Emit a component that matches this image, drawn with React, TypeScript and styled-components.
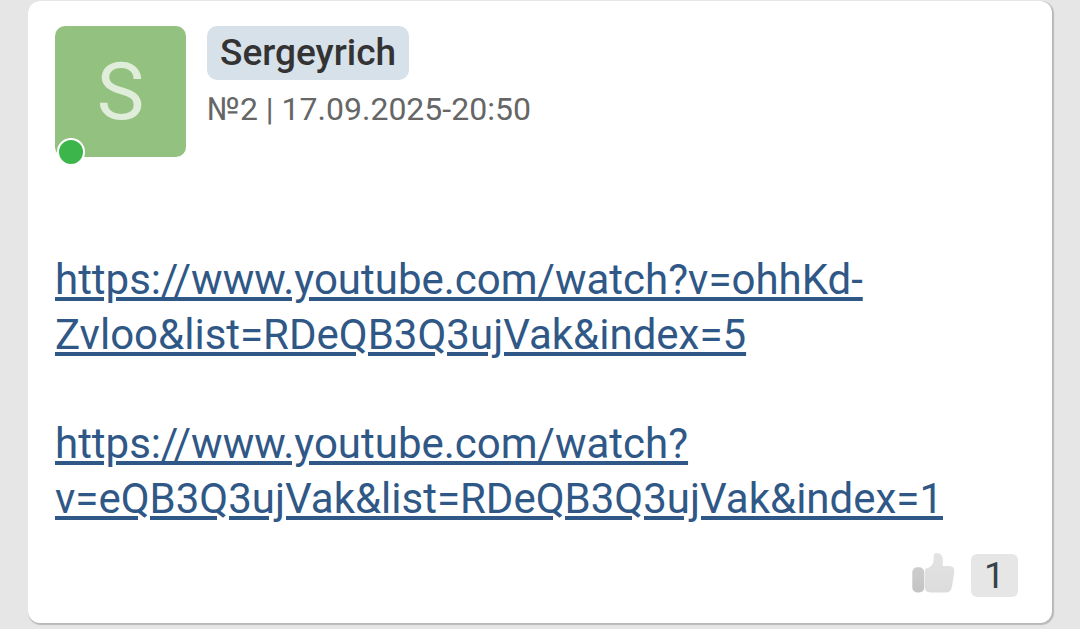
import React from 'react';
import styled, { createGlobalStyle } from 'styled-components';

const GlobalStyle = createGlobalStyle`
  * {
    box-sizing: border-box;
  }
  body {
    margin: 0;
    background: #e6e6e6;
    font-family: Roboto, 'Liberation Sans', sans-serif;
  }
`;

const Thread = styled.main`
  padding: 1px 28px 4px;
`;

const Post = styled.article`
  padding: 25px 34px 26px 27px;
  border-radius: 12px;
  background: #fff;
  box-shadow: 1px 1px 1px 1px #b8b8b8;
  clip-path: inset(0 -4px -4px 0);
`;

const PostHeader = styled.header`
  display: flex;
  align-items: flex-start;
  gap: 21px;
`;

const Avatar = styled.div`
  position: relative;
  display: flex;
  align-items: center;
  justify-content: center;
  width: 131px;
  height: 131px;
  border-radius: 10px;
  background: #93c17f;
  color: #e0edda;
  font-size: 80px;
  line-height: 80px;
`;

const OnlineDot = styled.span`
  position: absolute;
  left: 2px;
  bottom: -9px;
  width: 28px;
  height: 28px;
  border: 2px solid #fff;
  border-radius: 50%;
  background: #3cb54a;
`;

const AuthorInfo = styled.div`
  display: flex;
  flex-direction: column;
  align-items: flex-start;
  gap: 8px;
`;

const AuthorLink = styled.a`
  padding: 0 13px;
  border-radius: 10px;
  background: #d7e1ea;
  color: #333;
  font-size: 37px;
  font-weight: 500;
  line-height: 54px;
  text-decoration: none;
`;

const Meta = styled.div`
  color: #666;
  font-size: 32px;
  line-height: 42px;
`;

const PostBody = styled.div`
  display: flex;
  flex-direction: column;
  gap: 54px;
  margin-top: 95px;
`;

const Paragraph = styled.p`
  margin: 0;
  font-size: 42px;
  line-height: 55px;
`;

const BodyLink = styled.a`
  color: #305887;
  text-decoration: underline;
`;

const PostFooter = styled.footer`
  display: flex;
  align-items: center;
  justify-content: flex-end;
  gap: 16px;
  margin-top: 28px;
`;

const LikeButton = styled.button`
  display: flex;
  padding: 0;
  border: 0;
  background: none;
  cursor: pointer;
`;

const LikeCount = styled.button`
  width: 47px;
  height: 43px;
  padding: 0;
  border: 0;
  border-radius: 6px;
  background: #e6e6e6;
  color: #37424a;
  font-family: inherit;
  font-size: 37px;
  line-height: 43px;
  cursor: pointer;
`;

const ThumbIcon = () => (
  <svg width="44" height="43" viewBox="0 0 44 43" overflow="visible" aria-hidden="true">
    <defs>
      <linearGradient id="hand" x1="0" y1="0" x2="0" y2="1">
        <stop offset="0" stopColor="#e3e3e3" />
        <stop offset="1" stopColor="#dcdcdc" />
      </linearGradient>
      <linearGradient id="cuff" x1="0" y1="0" x2="0" y2="1">
        <stop offset="0" stopColor="#cdcdcd" />
        <stop offset="1" stopColor="#c3c3c3" />
      </linearGradient>
    </defs>
    <rect x="1.3" y="13.3" width="12" height="25.2" rx="5" fill="url(#cuff)" />
    <path
      d="M14 17C14 15 14.700 14.300 16.500 14C19.500 13.300 21.800 11 22.400 7.500C22.700 5.500 22.400 3.500 22.800 1.500C23.200-0.300 24-0.900 25.700-0.900C29.500-0.900 31.900 2 31.900 6C31.900 8.500 31.700 10.300 31.700 12H37.500C41.800 12 43.800 14 43.200 18C42.600 22.500 42 28 40.700 33.500C39.900 37 38.300 38.400 34.800 38.400H19.500C16 38.400 14 36.600 14 33.200Z"
      fill="url(#hand)"
    />
  </svg>
);

const links = [
  'https://www.youtube.com/watch?v=ohhKd-Zvloo&list=RDeQB3Q3ujVak&index=5',
  'https://www.youtube.com/watch?v=eQB3Q3ujVak&list=RDeQB3Q3ujVak&index=1',
];

export default function App() {
  return (
    <>
      <GlobalStyle />
      <Thread>
        <Post>
          <PostHeader>
            <Avatar>
              S
              <OnlineDot />
            </Avatar>
            <AuthorInfo>
              <AuthorLink href="#author">Sergeyrich</AuthorLink>
              <Meta>№2 | 17.09.2025-20:50</Meta>
            </AuthorInfo>
          </PostHeader>
          <PostBody>
            {links.map((url) => (
              <Paragraph key={url}>
                <BodyLink href={url}>{url}</BodyLink>
              </Paragraph>
            ))}
          </PostBody>
          <PostFooter>
            <LikeButton type="button" aria-label="Like">
              <ThumbIcon />
            </LikeButton>
            <LikeCount type="button">1</LikeCount>
          </PostFooter>
        </Post>
      </Thread>
    </>
  );
}
